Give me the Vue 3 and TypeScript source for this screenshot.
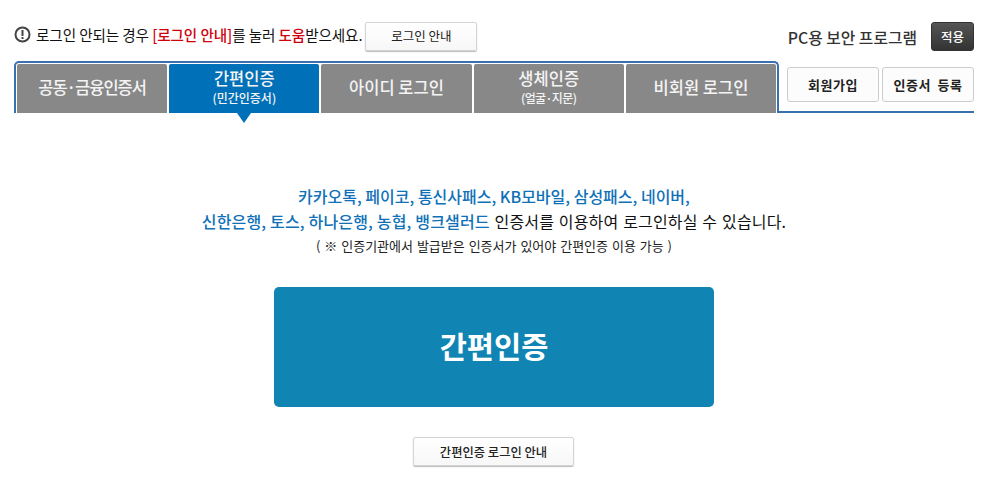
<template>
  <div class="login-page">
    <div class="top-row">
      <svg class="alert-icon" width="17" height="17" viewBox="0 0 17 17">
        <circle cx="8.5" cy="8.5" r="7" fill="none" stroke="#444" stroke-width="2" />
        <rect x="7.5" y="4" width="2" height="6" fill="#444" />
        <rect x="7.5" y="11" width="2" height="2" fill="#444" />
      </svg>
      <p class="notice">
        로그인 안되는 경우 <em>[로그인 안내]</em>를 눌러 <em>도움</em>받으세요.
      </p>
      <button class="btn guide-btn">로그인 안내</button>
      <span class="security-label">PC용 보안 프로그램</span>
      <button class="apply-btn">적용</button>
    </div>

    <div class="tab-row">
      <ul class="tabs">
        <li
          v-for="tab in tabs"
          :key="tab.name"
          class="tab"
          :class="{ active: tab.active, tight: tab.tight }"
        >
          <span class="tab-name">{{ tab.name }}</span>
          <span v-if="tab.sub" class="tab-sub">{{ tab.sub }}</span>
        </li>
      </ul>
      <div class="side-links">
        <button class="side-btn">회원가입</button>
        <button class="side-btn">인증서 등록</button>
      </div>
    </div>

    <div class="content">
      <p class="desc">
        <strong>카카오톡, 페이코, 통신사패스, KB모바일, 삼성패스, 네이버,</strong><br />
        <span class="wide"><strong>신한은행, 토스, 하나은행, 농협, 뱅크샐러드</strong> 인증서를 이용하여 로그인하실 수 있습니다.</span>
      </p>
      <p class="note">( ※ 인증기관에서 발급받은 인증서가 있어야 간편인증 이용 가능 )</p>
      <button class="main-btn">간편인증</button>
      <button class="btn bottom-btn">간편인증 로그인 안내</button>
    </div>
  </div>
</template>

<script setup lang="ts">
interface Tab {
  name: string
  sub?: string
  active?: boolean
  tight?: boolean
}

const tabs: Tab[] = [
  { name: '공동·금융인증서', tight: true },
  { name: '간편인증', sub: '(민간인증서)', active: true },
  { name: '아이디 로그인' },
  { name: '생체인증', sub: '(얼굴·지문)', tight: true },
  { name: '비회원 로그인' }
]
</script>

<style>
body {
  margin: 0;
  background: #fff;
}
</style>

<style scoped>
.login-page {
  width: 1000px;
  height: 494px;
  padding: 22px 26px 0 14px;
  box-sizing: border-box;
  overflow: hidden;
  font-family: "Noto Sans CJK KR", "Noto Sans", sans-serif;
  color: #111;
}

button {
  font-family: inherit;
  padding: 0;
  cursor: pointer;
}

.top-row {
  display: flex;
  align-items: center;
  height: 29px;
}

.alert-icon {
  flex: none;
  margin-right: 5px;
  margin-top: -5px;
}

.notice {
  margin: -5px 3px 0 0;
  font-size: 14.6px;
  letter-spacing: -0.1px;
  color: #111;
}

.notice em {
  font-style: normal;
  font-weight: 500;
  color: #d0000a;
}

.btn {
  background: linear-gradient(#fff, #f7f7f7);
  border: 1px solid #d4d4d4;
  border-radius: 2px;
  box-shadow: 0 1px 1px #bbb;
  color: #222;
  font-size: 12.5px;
}

.guide-btn {
  width: 112px;
  height: 29px;
  padding-bottom: 2px;
}

.security-label {
  margin-left: auto;
  margin-right: 14px;
  margin-top: 2px;
  font-size: 15.8px;
  font-weight: 500;
  color: #333;
}

.apply-btn {
  width: 43px;
  height: 29px;
  background: linear-gradient(#555, #333);
  border: 1px solid #333;
  border-radius: 3px;
  color: #fff;
  font-size: 12.5px;
  font-weight: 500;
}

.tab-row {
  display: flex;
  margin-top: 10px;
}

.tabs {
  display: flex;
  gap: 2px;
  width: 765px;
  height: 52px;
  margin: 0;
  padding: 1px 1px 0;
  box-sizing: border-box;
  list-style: none;
  border: 2px solid #3a6fb0;
  border-bottom: none;
  border-radius: 5px 5px 0 0;
}

.tab {
  position: relative;
  flex: 1;
  display: flex;
  flex-direction: column;
  align-items: center;
  justify-content: center;
  padding-bottom: 4px;
  background: #888;
  color: #f4f4f4;
  border-radius: 2px 2px 0 0;
}

.tab.active {
  background: #0070b8;
}

.tab.active::after {
  content: "";
  position: absolute;
  left: 50%;
  bottom: -10px;
  margin-left: -7px;
  border-left: 7px solid transparent;
  border-right: 7px solid transparent;
  border-top: 10px solid #0070b8;
}

.tab-name {
  font-size: 16.5px;
  font-weight: 500;
  line-height: 22px;
}

.tab-sub {
  font-size: 12px;
  font-weight: 500;
  line-height: 18px;
}

.tab.tight .tab-sub {
  letter-spacing: -0.6px;
}

.tab.tight:first-child .tab-name {
  letter-spacing: -1px;
}

.side-links {
  flex: 1;
  display: flex;
  gap: 3px;
  justify-content: flex-end;
  align-items: flex-start;
  padding-top: 6px;
  height: 52px;
  box-sizing: border-box;
  border-bottom: 2px solid #3a6fb0;
}

.side-btn {
  width: 92px;
  height: 35px;
  background: #fcfcfc;
  border: 1px solid #ccc;
  border-radius: 3px;
  color: #222;
  font-size: 13px;
  font-weight: 700;
  letter-spacing: 0.5px;
  word-spacing: 3px;
}

.content {
  display: flex;
  flex-direction: column;
  align-items: center;
  padding-top: 71px;
}

.desc {
  margin: 0;
  font-size: 16px;
  line-height: 25px;
  text-align: center;
  color: #111;
  word-spacing: 1px;
}

.desc strong {
  font-weight: 500;
  color: #0f71b8;
  word-spacing: 0;
}

.desc .wide {
  letter-spacing: 0.17px;
}

.note {
  margin: 4px 0 0;
  font-size: 13px;
  line-height: 16px;
  word-spacing: 1px;
  color: #222;
}

.main-btn {
  width: 440px;
  height: 120px;
  margin-top: 33px;
  padding-bottom: 5px;
  background: #1085b3;
  border: none;
  border-radius: 5px;
  color: #fff;
  font-size: 29.5px;
  font-weight: 700;
}

.bottom-btn {
  width: 161px;
  height: 29px;
  margin-top: 30px;
  margin-right: 1px;
  font-size: 12.3px;
  font-weight: 500;
}
</style>
